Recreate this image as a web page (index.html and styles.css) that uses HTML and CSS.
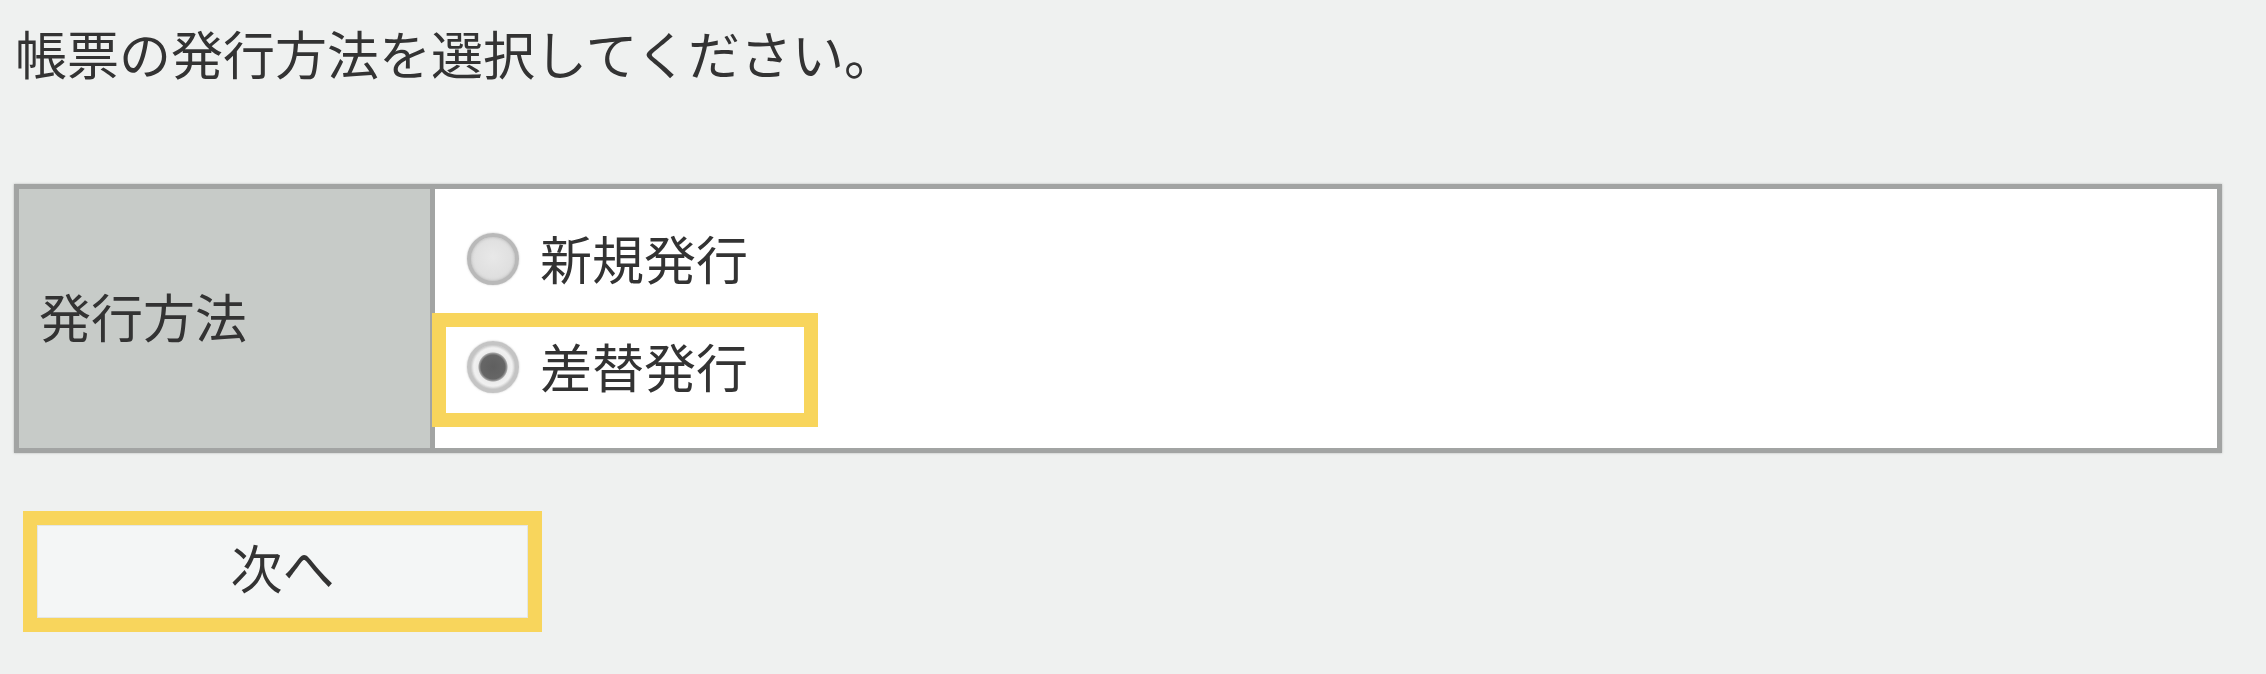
FILE: index.html
```html
<!DOCTYPE html>
<html lang="ja">
<head>
<meta charset="utf-8">
<title>帳票の発行方法</title>
<link rel="stylesheet" href="styles.css">
</head>
<body>
<main class="page">
  <p class="lead">帳票の発行方法を選択してください。</p>
  <div class="form-table">
    <div class="label-cell">発行方法</div>
    <div class="value-cell">
      <label class="option"><input type="radio" name="method" class="radio"><span>新規発行</span></label>
      <label class="option"><input type="radio" name="method" class="radio" checked><span>差替発行</span></label>
      <div class="highlight highlight-option"></div>
    </div>
  </div>
  <div class="actions">
    <button type="button" class="next-btn">次へ</button>
  </div>
</main>
</body>
</html>
```
FILE: styles.css
```css
* { box-sizing: border-box; }
html, body {
  margin: 0;
  padding: 0;
  background: #eff1f0;
}
body {
  font-family: "Noto Sans CJK JP", "Noto Sans", sans-serif;
  font-size: 52px;
  color: #333;
  width: 2266px;
  height: 674px;
  overflow: hidden;
}
.page {
  padding-top: 22px;
}
.lead {
  margin: 0 0 100px 15px;
  line-height: 62px;
  height: 62px;
}
.form-table {
  display: flex;
  margin-left: 14px;
  width: 2208px;
  height: 269px;
  border: 5px solid #a2a4a3;
  box-shadow: 0 0 2px rgba(120,120,120,0.5);
  background: #fff;
}
.label-cell {
  width: 416px;
  flex: 0 0 416px;
  background: #c7cbc8;
  border-right: 5px solid #a2a4a3;
  display: flex;
  align-items: center;
  padding: 0 0 4px 20px;
  line-height: 1.2;
}
.value-cell {
  position: relative;
  flex: 1;
  padding: 16px 0 0 32px;
  display: flex;
  flex-direction: column;
}
.option {
  height: 108px;
  display: flex;
  align-items: center;
  line-height: 1.2;
}
.option span {
  margin-left: 21px;
  padding-bottom: 2px;
}
.radio {
  appearance: none;
  -webkit-appearance: none;
  margin: 0;
  width: 52px;
  height: 52px;
  border-radius: 50%;
  border: 4px solid #b9b9b9;
  background: radial-gradient(circle at 50% 45%, #e8e8e8 0%, #dedede 70%, #d2d2d2 100%);
  box-shadow: 0 0 2px rgba(150,150,150,0.6), inset 0 0 3px rgba(140,140,140,0.5);
}
.radio:checked {
  border-color: #c4c4c4;
  background: radial-gradient(circle, #5f5f5f 0, #666 12px, #a0a0a0 14px, #ebebeb 15px, #f2f2f2 19px, #dcdcdc 22px);
}
.highlight {
  position: absolute;
  border: 14px solid #f8d55c;
  pointer-events: none;
}
.highlight-option {
  left: -3px;
  top: 124px;
  width: 386px;
  height: 114px;
}
.actions {
  margin: 72px 0 0 37px;
}
.next-btn {
  display: block;
  width: 491px;
  height: 93px;
  background: #f4f6f6;
  border: 1px solid #e3e6e6;
  outline: 14px solid #f8d55c;
  font-family: inherit;
  font-size: 52px;
  color: #333;
  line-height: 1;
  padding: 0 0 10px 0;
}
```
